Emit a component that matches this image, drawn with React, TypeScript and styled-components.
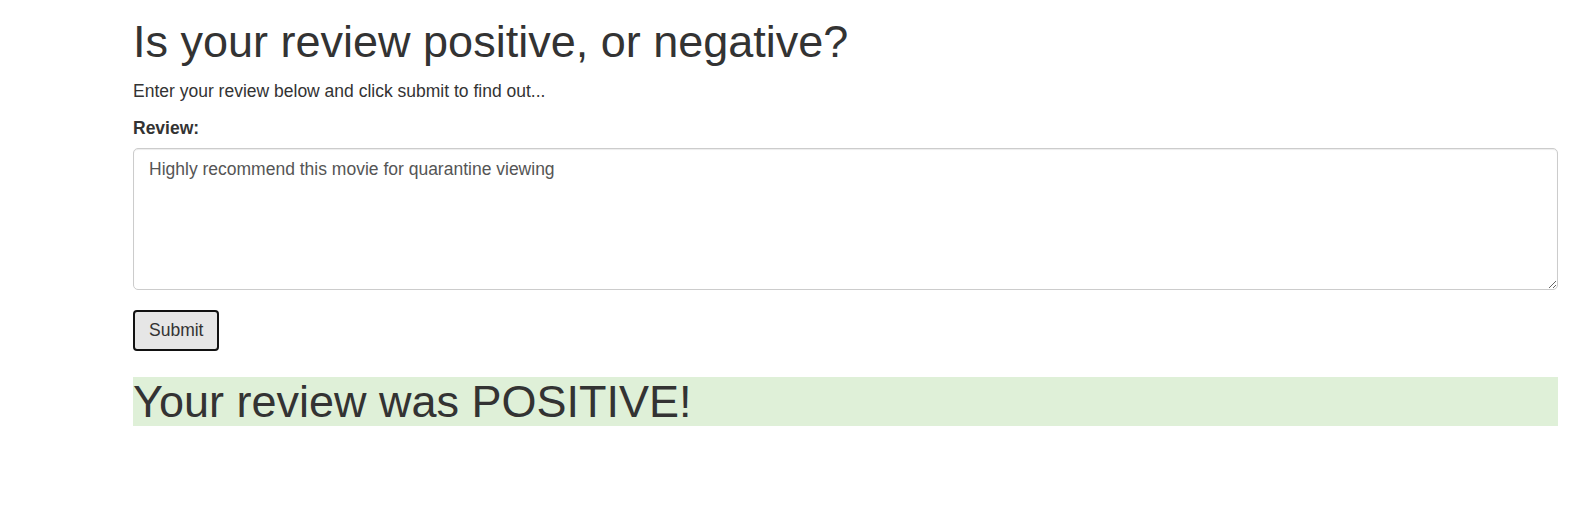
import React, { useState } from "react";
import styled, { createGlobalStyle } from "styled-components";

const GlobalStyle = createGlobalStyle`
  html, body { margin: 0; padding: 0; background: #fff; }
  body {
    font-family: "Liberation Sans", Arial, Helvetica, sans-serif;
    font-size: 17.5px;
    line-height: 1.42857;
    color: #333;
  }
  * { box-sizing: border-box; }
`;

const Page = styled.div`
  padding: 0 22px 0 133px;
`;

const Heading = styled.h1<{ $top: number; $success?: boolean }>`
  margin: ${(p) => p.$top}px 0 12.5px;
  font-size: 45px;
  font-weight: 500;
  line-height: 49px;
  background: ${(p) => (p.$success ? "#dff0d8" : "transparent")};
`;

const Lead = styled.p`
  margin: 0 0 12.5px;
`;

const FormGroup = styled.div`
  margin-bottom: 20px;
`;

const Label = styled.label`
  display: block;
  font-weight: 700;
  margin-bottom: 7.5px;
`;

const TextArea = styled.textarea`
  display: block;
  width: 100%;
  height: 142px;
  padding: 7.5px 15px;
  font-family: inherit;
  font-size: 17.5px;
  line-height: 1.42857;
  color: #555;
  background: #fff;
  border: 1px solid #ccc;
  border-radius: 5px;
  box-shadow: inset 0 1px 1px rgba(0, 0, 0, 0.075);
  resize: vertical;
  outline: none;
`;

const Button = styled.button`
  display: block;
  height: 41px;
  padding: 0 14px;
  font-family: inherit;
  font-size: 17.5px;
  color: #333;
  background: #e6e6e6;
  border: 2px solid #111;
  border-radius: 4px;
  cursor: pointer;
`;

export default function App() {
  const [text, setText] = useState("Highly recommend this movie for quarantine viewing");
  return (
    <>
      <GlobalStyle />
      <Page>
        <Heading $top={17}>Is your review positive, or negative?</Heading>
        <Lead>Enter your review below and click submit to find out...</Lead>
        <FormGroup>
          <Label htmlFor="review">Review:</Label>
          <TextArea id="review" value={text} onChange={(e) => setText(e.target.value)} />
        </FormGroup>
        <Button type="button">Submit</Button>
        <Heading $top={26} $success>Your review was POSITIVE!</Heading>
      </Page>
    </>
  );
}
